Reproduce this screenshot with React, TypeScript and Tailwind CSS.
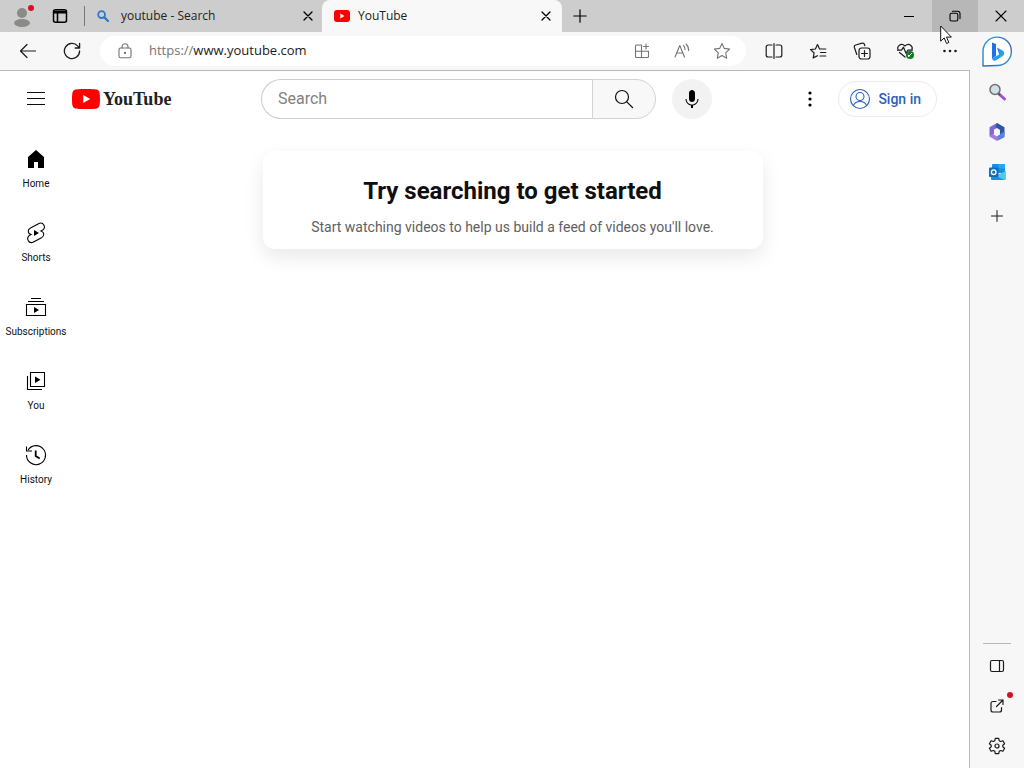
import type { ReactNode } from "react";

function Icon({ size = 20, width = 1.2, className = "", children }: { size?: number; width?: number; className?: string; children: ReactNode }) {
  return (
    <svg
      width={size}
      height={size}
      viewBox={`0 0 ${size} ${size}`}
      fill="none"
      stroke="currentColor"
      strokeWidth={width}
      strokeLinecap="round"
      strokeLinejoin="round"
      className={`shrink-0 ${className}`}
      aria-hidden="true"
    >
      {children}
    </svg>
  );
}

function ToolButton({ label, children }: { label: string; children: ReactNode }) {
  return (
    <button aria-label={label} className="flex h-8 w-10 shrink-0 items-center justify-center">
      {children}
    </button>
  );
}

function RailButton({ label, children }: { label: string; children: ReactNode }) {
  return (
    <button aria-label={label} className="relative flex h-10 w-10 items-center justify-center">
      {children}
    </button>
  );
}

function CloseTab() {
  return (
    <button aria-label="Close tab" className="flex h-5 w-5 items-center justify-center">
      <Icon size={10} width={1.3}>
        <path d="M1 1l8 8M9 1L1 9" />
      </Icon>
    </button>
  );
}

function TitleBar() {
  return (
    <header className="flex h-8 bg-[#cdcdcd]">
      <button aria-label="Profile" className="flex w-11 items-center justify-center">
        <svg width="24" height="24" viewBox="0 0 24 24" aria-hidden="true">
          <circle cx="12" cy="9" r="5" fill="#8a8a88" />
          <ellipse cx="12" cy="19" rx="8" ry="4" fill="#8a8a88" />
          <circle cx="21" cy="4" r="3" fill="#d9101c" />
        </svg>
      </button>
      <button aria-label="Tab actions" className="flex w-8 items-center justify-center">
        <Icon size={16} width={1.5}>
          <rect x="1.5" y="1.8" width="13" height="12.5" rx="2" />
          <path d="M2 3.5h12M2 4.6h12M5.5 5v9" strokeWidth="1.6" />
        </Icon>
      </button>
      <div className="ml-2 flex w-[238px] shrink-0 items-center pl-3 pr-1">
        <span className="-ml-3 mr-3 h-5 w-px bg-[#777]" />
        <Icon size={12} width={1.8} className="text-[#2f79c4]">
          <circle cx="4.6" cy="4.6" r="3.4" />
          <path d="M7.4 7.4L11 11" strokeWidth="2.2" />
        </Icon>
        <span className="ml-3 flex-1 text-xs text-[#222]">youtube - Search</span>
        <CloseTab />
      </div>
      <div className="flex w-60 shrink-0 items-center rounded-t-lg bg-[#f8f8f8] pl-3 pr-1.5">
        <svg width="16" height="12" viewBox="0 0 16 12" aria-hidden="true">
          <rect width="16" height="12" rx="3" fill="#f00" />
          <path d="M6.3 3.5v5l4.2-2.5z" fill="#fff" />
        </svg>
        <span className="ml-2 flex-1 text-xs text-[#222]">YouTube</span>
        <CloseTab />
      </div>
      <button aria-label="New tab" className="flex w-9 items-center justify-center">
        <Icon size={14}>
          <path d="M7 .8v12.4M.8 7h12.4" />
        </Icon>
      </button>
      <div className="ml-auto flex">
        <button aria-label="Minimize" className="flex w-[46px] items-center justify-center">
          <Icon size={10} width={1}>
            <path d="M0 5.5h10" />
          </Icon>
        </button>
        <button aria-label="Restore" className="relative flex w-[46px] items-center justify-center bg-[#b7b7b7]">
          <Icon size={12} width={1.1}>
            <rect x="1" y="3.2" width="7.8" height="7.8" rx="1.5" />
            <path d="M3.4 1.2h5.2a2.4 2.4 0 012.4 2.4v5" />
          </Icon>
          <svg width="13" height="20" viewBox="0 0 13 20" className="absolute left-2 top-[25px] z-10" aria-hidden="true">
            <path d="M.7 1v15.2l3.5-3.3 2.4 5.6 2.3-1-2.4-5.4h4.9z" fill="#fff" stroke="#111" strokeWidth="1" />
          </svg>
        </button>
        <button aria-label="Close" className="flex w-[46px] items-center justify-center">
          <Icon size={12} width={1.1}>
            <path d="M1 1l10 10M11 1L1 11" />
          </Icon>
        </button>
      </div>
    </header>
  );
}

function Toolbar() {
  return (
    <div className="flex h-[38px] items-center gap-1 pl-2 text-[#1b1b1b]">
      <ToolButton label="Back">
        <Icon size={18}>
          <path d="M16.5 9H1.5M8 2.5L1.5 9 8 15.5" />
        </Icon>
      </ToolButton>
      <ToolButton label="Refresh">
        <Icon size={18} width={1.3}>
          <path d="M16.6 9A7.6 7.6 0 1114.8 4.1L16.6 6M16.6 1.5V6h-4.4" />
        </Icon>
      </ToolButton>
      <div className="mx-1 flex h-[30px] flex-1 items-center rounded-full bg-white pl-[17px] pr-1 text-[#747474]">
        <Icon size={16} width={1.1}>
          <rect x="2" y="5" width="12" height="9.8" rx="1.5" />
          <path d="M5 5V3.8a3 3 0 016 0V5" />
          <circle cx="8" cy="10" r=".6" fill="currentColor" />
        </Icon>
        <div className="ml-4 flex-1 text-[13px]">
          https://<span className="text-[#1b1b1b]">www.youtube.com</span>
        </div>
        <ToolButton label="Apps">
          <Icon size={16} width={1.1}>
            <path d="M7.5 2H2.5a1 1 0 00-1 1v10.500a1 1 0 001 1H13.500a1 1 0 001-1V8.200H1.500M7.500 2v12.500M12 1v5M9.500 3.500h5" />
          </Icon>
        </ToolButton>
        <ToolButton label="Read aloud">
          <Icon size={18} width={1.1}>
            <path d="M2 15L6.800 3.500 11.500 15M3.600 11h6.300M10.500 3.500q1.500 1.500 1.500 4M13 2q2.800 2.500 2.600 6.500" />
          </Icon>
        </ToolButton>
        <ToolButton label="Add to favorites">
          <Icon size={18} width={1.1}>
            <path d="M9 1.500l2.300 4.900 5.300.7-3.900 3.700 1 5.400L9 13.600l-4.700 2.600 1-5.400L1.400 7.100l5.300-.7z" />
          </Icon>
        </ToolButton>
      </div>
      <ToolButton label="Split screen">
        <Icon size={18}>
          <path d="M7 3H3.200a2 2 0 00-2 2v8a2 2 0 002 2H7M11 3h3.800a2 2 0 012 2v8a2 2 0 01-2 2H11M9 1.500v15" />
        </Icon>
      </ToolButton>
      <ToolButton label="Favorites">
        <Icon size={18}>
          <path d="M8.500 13.700l-4.300 2.200.9-4.900-3.600-3.400 4.900-.6 2.100-4.500L10.600 7h6.200M11.500 10.500h5.300M11 14h5.800" />
        </Icon>
      </ToolButton>
      <ToolButton label="Collections">
        <Icon size={18}>
          <rect x="6" y="6" width="11" height="11" rx="2.500" />
          <path d="M3.800 12.500l-2.400-7a2 2 0 011.300-2.500l6.300-1.800a2 2 0 012.500 1.300l.3 1.200M11.500 8.500v6M8.500 11.500h6" />
        </Icon>
      </ToolButton>
      <ToolButton label="Browser essentials">
        <Icon size={20}>
          <path d="M2.200 9.200C.5 5.500 4.800 1.300 9 5c4.200-3.700 8.500.5 6.800 4.200M3.500 11.500L9 16M1.500 9.200h4l2-3 2.500 6 1.800-3h4.500" />
          <circle cx="14" cy="14" r="4" fill="#147a23" stroke="none" />
          <path d="M12.500 15.500l3-3M12.400 14.300l.6 1.200" stroke="#fff" strokeWidth="1" />
        </Icon>
      </ToolButton>
      <ToolButton label="Settings and more">
        <Icon size={16} width={0}>
          <g fill="currentColor">
            <circle cx="2.500" cy="8" r="1.300" />
            <circle cx="8" cy="8" r="1.300" />
            <circle cx="13.500" cy="8" r="1.300" />
          </g>
        </Icon>
      </ToolButton>
    </div>
  );
}

function Masthead() {
  return (
    <div className="flex h-14 items-center pl-4 pr-8">
      <div className="flex w-[167px] shrink-0 items-center">
        <button aria-label="Guide" className="flex h-10 w-10 items-center justify-center">
          <svg width="18" height="14" viewBox="0 0 18 14" stroke="#0f0f0f" aria-hidden="true">
            <path d="M0 .5h18M0 6.500h18M0 12.500h18" />
          </svg>
        </button>
        <a href="#" aria-label="YouTube home" className="ml-4 flex items-center gap-[3px]">
          <svg width="28" height="20" viewBox="0 0 28 20" aria-hidden="true">
            <path
              d="M27.400 3.100A3.500 3.500 0 0024.900.6C22.700 0 14 0 14 0S5.300 0 3.100.6A3.500 3.500 0 00.6 3.100C0 5.300 0 10 0 10s0 4.700.6 6.900a3.500 3.500 0 002.500 2.500C5.300 20 14 20 14 20s8.700 0 10.900-.6a3.500 3.500 0 002.500-2.500c.6-2.200.6-6.900.6-6.900s0-4.700-.6-6.900z"
              fill="#f00"
            />
            <path d="M11.200 6v8l7-4z" fill="#fff" />
          </svg>
          <span className="font-['Liberation_Sans_Narrow'] text-lg font-bold leading-5 text-[#212121]">YouTube</span>
        </a>
      </div>
      <div className="mx-[78px] flex max-w-[732px] flex-1">
        <form className="flex h-10 flex-1" onSubmit={(e) => e.preventDefault()}>
          <input
            type="text"
            aria-label="Search"
            placeholder="Search"
            className="min-w-0 flex-1 rounded-l-full border border-r-0 border-[#ccc] bg-white pl-4 text-base outline-none placeholder:text-[#818181]"
          />
          <button aria-label="Search" className="flex w-16 items-center justify-center rounded-r-full border border-[#d3d3d3] bg-[#f8f8f8]">
            <Icon size={20}>
              <circle cx="8" cy="8" r="6.500" />
              <path d="M12.800 12.800L18.500 18.500" />
            </Icon>
          </button>
        </form>
        <button aria-label="Search with your voice" className="ml-4 flex h-10 w-10 items-center justify-center rounded-full bg-[#f2f2f2]">
          <svg width="24" height="24" viewBox="0 0 24 24" aria-hidden="true">
            <path d="M12 3c-1.660 0-3 1.370-3 3.070v5.860C9 13.630 10.340 15 12 15s3-1.370 3-3.070V6.070C15 4.370 13.660 3 12 3zM18.500 12h-1c0 3.030-2.470 5.500-5.500 5.500S6.500 15.030 6.500 12h-1c0 3.240 2.390 5.930 5.500 6.410V21h2v-2.590c3.110-.48 5.500-3.170 5.500-6.410z" />
          </svg>
        </button>
      </div>
      <div className="flex items-center gap-2">
        <button aria-label="Settings" className="flex h-10 w-10 items-center justify-center">
          <svg width="24" height="24" viewBox="0 0 24 24" aria-hidden="true">
            <circle cx="12" cy="6" r="1.600" />
            <circle cx="12" cy="12" r="1.600" />
            <circle cx="12" cy="18" r="1.600" />
          </svg>
        </button>
        <a href="#" className="flex h-9 items-center gap-1.5 rounded-full border border-[#ececec] pl-[9px] pr-[15px] text-sm font-medium text-[#2a62b8]">
          <Icon size={24} width={1.1}>
            <circle cx="12" cy="12" r="9.500" />
            <circle cx="12" cy="9.500" r="4" />
            <path d="M5.500 18.500c1-3 3.500-4 6.500-4s5.500 1 6.500 4" />
          </Icon>
          Sign in
        </a>
      </div>
    </div>
  );
}

const guide = [
  {
    label: "Home",
    icon: <path d="M4 10v11h6v-6h4v6h6V10l-8-7z" fill="#000" stroke="none" />,
  },
  {
    label: "Shorts",
    icon: (
      <>
        <path d="M14.500 2.700l-8 4.200C3.300 8.700 3.500 12.500 7 13.600c-3.200 1.400-4.100 3.600-2.800 6 1.200 2 3.400 2.300 5.300 1.300l8-4.200c3.200-1.800 3-5.500-.5-6.700 3-1.300 4.300-3.200 3-5.800-1.200-2-3.600-2.500-5.500-1.500z" />
        <path d="M10 9v6l5-3z" fill="#000" stroke="none" />
      </>
    ),
  },
  {
    label: "Subscriptions",
    icon: (
      <>
        <path d="M2.500 9.500h19v11h-19zM4 6.500h16M7 3.500h10" />
        <path d="M10 12v6l5-3z" fill="#000" stroke="none" />
      </>
    ),
  },
  {
    label: "You",
    icon: (
      <>
        <path d="M6.500 3.500h14v14h-14zM3.500 7v13.500H18" />
        <path d="M11 7.500v6.500l5.500-3.200z" fill="#000" stroke="none" />
      </>
    ),
  },
  {
    label: "History",
    icon: (
      <>
        <path d="M4 7a9.500 9.500 0 11-1.500 5M2.500 3.500V8H8" />
        <path d="M11.700 7.500V13l4 2.500" strokeWidth="1.800" />
      </>
    ),
  },
];

function Guide() {
  return (
    <nav className="w-[72px] shrink-0 pt-1">
      {guide.map((item) => (
        <a key={item.label} href="#" className="flex flex-col items-center pb-3.5 pt-4">
          <svg width="24" height="24" viewBox="0 0 24 24" fill="none" stroke="#000" strokeWidth="1.100" aria-hidden="true">
            {item.icon}
          </svg>
          <span className="mt-1.5 text-[10px] leading-[14px]">{item.label}</span>
        </a>
      ))}
    </nav>
  );
}

function Rail() {
  return (
    <aside className="flex w-[54px] shrink-0 flex-col items-center pb-0.5 text-[#1b1b1b]">
      <RailButton label="Bing chat">
        <svg width="32" height="32" viewBox="0 0 32 32" fill="none" aria-hidden="true">
          <defs>
            <linearGradient id="bing" x1="0" y1="0" x2="1" y2="1">
              <stop offset="0" stopColor="#22a6df" />
              <stop offset=".6" stopColor="#3c67b8" />
              <stop offset="1" stopColor="#3aa0d8" />
            </linearGradient>
            <linearGradient id="bingMark" x1="0" y1="0" x2="1" y2="1">
              <stop offset="0" stopColor="#1f6fe0" />
              <stop offset="1" stopColor="#2fbdf0" />
            </linearGradient>
          </defs>
          <path d="M2 30V15.500A14.200 14.200 0 1116.500 29.500z" fill="#fff" stroke="url(#bing)" strokeWidth="1.400" strokeLinejoin="round" />
          <path d="M11 6.500l4 1.500v12l-4 2.600z" fill="#1c74e4" />
          <path d="M16 11.500l5.500 3c2.400 1.500 2 4.300.3 5.500l-7 4.500q-3 1-3.800-2l7-4z" fill="url(#bingMark)" />
        </svg>
      </RailButton>
      <RailButton label="Search">
        <svg width="20" height="20" viewBox="0 0 20 20" fill="none" aria-hidden="true">
          <path d="M12 12l5.500 5" stroke="#a94bd0" strokeWidth="3" strokeLinecap="round" />
          <path d="M11 11l2 2" stroke="#555" strokeWidth="2" />
          <circle cx="8" cy="7.500" r="5" fill="#cfe0e8" stroke="#707070" strokeWidth="1.500" />
        </svg>
      </RailButton>
      <RailButton label="Microsoft 365">
        <svg width="20" height="20" viewBox="0 0 20 20" aria-hidden="true">
          <path d="M10 1L2.500 5.200v9.300L7 12V7.500L14 4z" fill="#8068d8" />
          <path d="M10 1l7.500 4.200v7L13 14V8L8.500 5z" fill="#2f55a4" />
          <path d="M17.500 9.500V15L10 19l-7.500-4.500L6 12l4 2.500z" fill="#a879e0" />
          <path d="M17.500 10v5L12 18l-2-3.500 3-2z" fill="#4c8be0" />
        </svg>
      </RailButton>
      <RailButton label="Outlook">
        <svg width="18" height="18" viewBox="0 0 18 18" fill="none" aria-hidden="true">
          <rect x="4" y="1" width="13" height="9" rx="1" fill="#1490df" />
          <path d="M10.500 1H17v4.500h-6.500z" fill="#28a8ea" />
          <path d="M3 8l7.500 4L17.500 8v8a1 1 0 01-1 1H4a1 1 0 01-1-1z" fill="#1a8fdc" />
          <path d="M17.500 8v8a1 1 0 01-1 1L8 13z" fill="#50c8f0" />
          <rect x="1" y="4.500" width="9.500" height="9.500" rx="1" fill="#0f6cbd" />
          <circle cx="5.700" cy="9.200" r="2.300" stroke="#fff" strokeWidth="1.400" />
        </svg>
      </RailButton>
      <div className="mt-1">
        <RailButton label="Customize">
          <Icon size={12} width={1}>
            <path d="M6 .5v11M.5 6h11" />
          </Icon>
        </RailButton>
      </div>
      <div className="mt-auto w-7 border-t border-[#b8b8b8] pt-0.5" />
      <RailButton label="Hide sidebar">
        <Icon size={16}>
          <rect x="1.500" y="2.500" width="13" height="11" rx="1.500" />
          <path d="M10.500 2.500v11" />
        </Icon>
      </RailButton>
      <RailButton label="Open in new window">
        <Icon size={16}>
          <path d="M7 3.500H4a2 2 0 00-2 2V12a2 2 0 002 2h6.500a2 2 0 002-2V9.500M9.500 2H14v4.500M14 2L7.500 8.500" />
        </Icon>
        <span className="absolute right-1 top-1.5 h-1.5 w-1.5 rounded-full bg-[#d3131f]" />
      </RailButton>
      <RailButton label="Settings">
        <Icon size={18}>
          <path d="M7.300 1.300h3.400l.5 2.400 1.400.8 2.300-.8 1.700 3-1.800 1.500v1.600l1.800 1.500-1.700 3-2.300-.8-1.400.8-.5 2.400H7.300l-.5-2.400-1.400-.8-2.300.8-1.700-3 1.800-1.500V8.200L1.400 6.700l1.700-3 2.300.8 1.400-.8z" />
          <circle cx="9" cy="9" r="2" />
        </Icon>
      </RailButton>
    </aside>
  );
}

export default function App() {
  return (
    <div className="flex min-h-screen flex-col bg-[#f7f7f7] font-['Open_Sans',sans-serif]">
      <TitleBar />
      <div className="flex flex-1">
        <div className="flex min-w-0 flex-1 flex-col">
          <Toolbar />
          {/* Page */}
          <div className="flex flex-1 flex-col border-r border-t border-[#b9b9b9] bg-white font-[Roboto,sans-serif] text-[#0f0f0f]">
            <Masthead />
            <div className="flex flex-1">
              <Guide />
              <main className="flex flex-1 items-start justify-center pr-4">
                <section className="mt-6 w-full max-w-[500px] rounded-xl bg-white px-6 pb-3 pt-6 text-center shadow-[0_8px_20px_rgba(0,0,0,0.09)]">
                  <h1 className="text-2xl font-bold leading-8">Try searching to get started</h1>
                  <p className="mt-2.5 text-sm leading-5 text-[#606060]">
                    Start watching videos to help us build a feed of videos you'll love.
                  </p>
                </section>
              </main>
            </div>
          </div>
        </div>
        <Rail />
      </div>
    </div>
  );
}
